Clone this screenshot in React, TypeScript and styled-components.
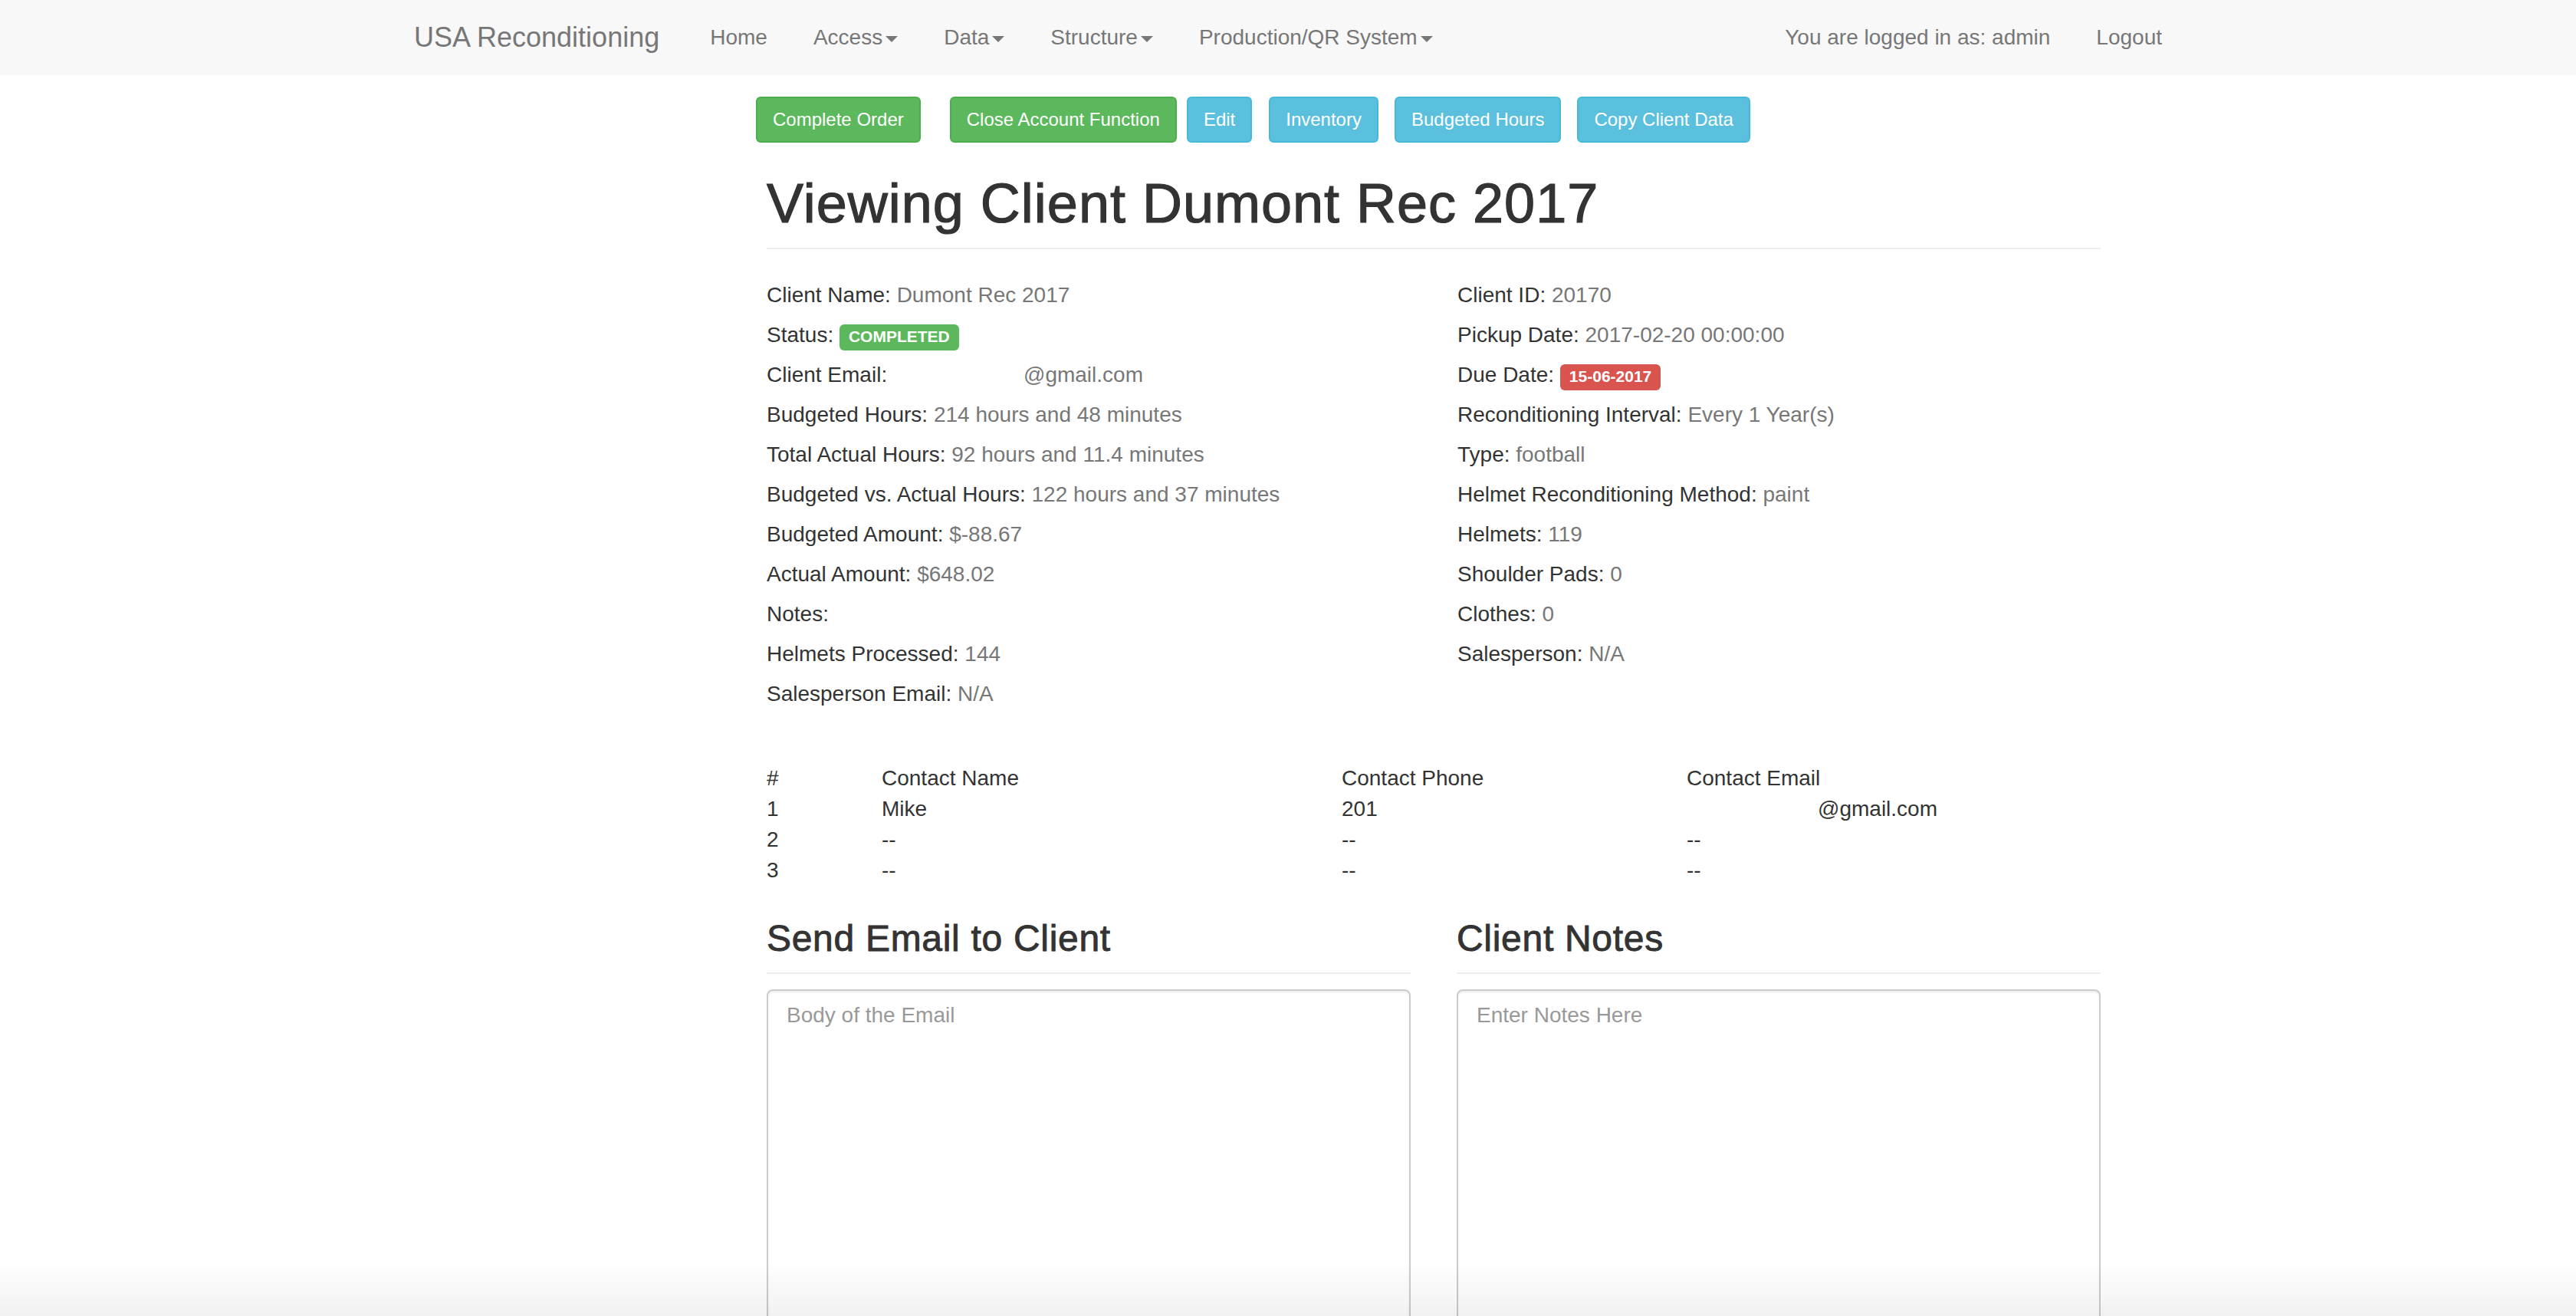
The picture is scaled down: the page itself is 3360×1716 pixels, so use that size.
import React from 'react'
import styled, { createGlobalStyle, css } from 'styled-components'

const GlobalStyle = createGlobalStyle`
    * { box-sizing: border-box; }
    body {
        margin: 0;
        background: #fff;
        color: #333;
        font-family: "Liberation Sans", Helvetica, Arial, sans-serif;
        font-size: 28px;
        line-height: 40px;
    }
`

const Navbar = styled.nav`
    height: 98px;
    background: #f8f8f8;
`

const NavContainer = styled.div`
    width: 2340px;
    height: 100%;
    margin: 0 auto;
    padding: 0 30px;
    display: flex;
    align-items: center;
`

const Brand = styled.a`
    font-size: 36px;
    line-height: 40px;
    color: #777;
    padding-right: 36px;
    text-decoration: none;
`

const NavList = styled.ul<{ $right?: boolean }>`
    display: flex;
    list-style: none;
    margin: 0;
    padding: 0;
    ${p => p.$right && css`
        margin-left: auto;
        margin-right: -30px;
    `}
`

const NavLink = styled.a`
    display: block;
    padding: 0 30px;
    color: #777;
    font-size: 28px;
    line-height: 40px;
    text-decoration: none;
    white-space: nowrap;
`

const Caret = styled.span`
    display: inline-block;
    width: 0;
    height: 0;
    margin-left: 4px;
    vertical-align: middle;
    border-top: 8px solid #777;
    border-left: 8px solid transparent;
    border-right: 8px solid transparent;
`

const Main = styled.main`
    width: 1740px;
    margin-left: 1000px;
`

const ButtonBar = styled.div`
    display: flex;
    margin: 28px 0 0 -14px;
`

const Btn = styled.button<{ $variant: 'success' | 'info'; $ml?: number }>`
    height: 60px;
    padding: 0 20px;
    margin-left: ${p => p.$ml ?? 0}px;
    font-family: inherit;
    font-size: 24px;
    line-height: 36px;
    color: #fff;
    border-radius: 6px;
    border: 2px solid ${p => (p.$variant === 'success' ? '#4cae4c' : '#46b8da')};
    background: ${p => (p.$variant === 'success' ? '#5cb85c' : '#5bc0de')};
    white-space: nowrap;
`

const Title = styled.h1`
    margin: 40px 0 0;
    padding-bottom: 18px;
    font-size: 72px;
    font-weight: 400;
    line-height: 79px;
    letter-spacing: 1px;
    -webkit-text-stroke: 1.2px #333;
    border-bottom: 2px solid #eee;
`

const InfoGrid = styled.div`
    display: grid;
    grid-template-columns: 901px 1fr;
    margin-top: 34px;
`

const InfoRow = styled.div`
    line-height: 52px;
    white-space: nowrap;
`

const Muted = styled.span`
    color: #777;
`

const Redacted = styled.span<{ $w: number }>`
    display: inline-block;
    width: ${p => p.$w}px;
`

const Badge = styled.span<{ $tone: 'success' | 'danger' }>`
    display: inline-block;
    padding: 5px 12px 8px;
    font-size: 21px;
    font-weight: 700;
    line-height: 21px;
    color: #fff;
    border-radius: 6px;
    background: ${p => (p.$tone === 'success' ? '#5cb85c' : '#d9534f')};
`

const ContactTable = styled.table`
    width: 1740px;
    margin-top: 64px;
    border-collapse: collapse;

    th, td {
        padding: 0;
        text-align: left;
        font-weight: 400;
        line-height: 40px;
        white-space: nowrap;
    }
`

const Sections = styled.div`
    display: grid;
    grid-template-columns: 840px 840px;
    column-gap: 60px;
    margin-top: 42px;
`

const SectionTitle = styled.h3`
    margin: 0 0 20px;
    padding-bottom: 18px;
    font-size: 48px;
    font-weight: 400;
    line-height: 53px;
    letter-spacing: 0.7px;
    -webkit-text-stroke: 0.9px #333;
    border-bottom: 2px solid #eee;
`

const TextArea = styled.textarea`
    display: block;
    width: 100%;
    height: 560px;
    padding: 12px 24px;
    font-family: "Liberation Sans", Helvetica, Arial, sans-serif;
    font-size: 28px;
    line-height: 40px;
    color: #555;
    border: 2px solid #ccc;
    border-radius: 8px;
    box-shadow: inset 0 2px 2px rgba(0, 0, 0, 0.075);
    resize: vertical;

    &::placeholder {
        color: #999;
    }
`

const BottomShade = styled.div`
    position: fixed;
    left: 0;
    right: 0;
    bottom: 0;
    height: 70px;
    pointer-events: none;
    background: linear-gradient(rgba(0, 0, 0, 0), rgba(0, 0, 0, 0.055));
`

const leftInfo: [string, React.ReactNode][] = [
    ['Client Name', <Muted>Dumont Rec 2017</Muted>],
    ['Status', <Badge $tone="success">COMPLETED</Badge>],
    ['Client Email', <Muted><Redacted $w={170} />@gmail.com</Muted>],
    ['Budgeted Hours', <Muted>214 hours and 48 minutes</Muted>],
    ['Total Actual Hours', <Muted>92 hours and 11.4 minutes</Muted>],
    ['Budgeted vs. Actual Hours', <Muted>122 hours and 37 minutes</Muted>],
    ['Budgeted Amount', <Muted>$-88.67</Muted>],
    ['Actual Amount', <Muted>$648.02</Muted>],
    ['Notes', null],
    ['Helmets Processed', <Muted>144</Muted>],
    ['Salesperson Email', <Muted>N/A</Muted>],
]

const rightInfo: [string, React.ReactNode][] = [
    ['Client ID', <Muted>20170</Muted>],
    ['Pickup Date', <Muted>2017-02-20 00:00:00</Muted>],
    ['Due Date', <Badge $tone="danger">15-06-2017</Badge>],
    ['Reconditioning Interval', <Muted>Every 1 Year(s)</Muted>],
    ['Type', <Muted>football</Muted>],
    ['Helmet Reconditioning Method', <Muted>paint</Muted>],
    ['Helmets', <Muted>119</Muted>],
    ['Shoulder Pads', <Muted>0</Muted>],
    ['Clothes', <Muted>0</Muted>],
    ['Salesperson', <Muted>N/A</Muted>],
]

const contacts = [
    { id: 1, name: 'Mike', phone: '201', email: '@gmail.com' },
    { id: 2, name: '--', phone: '--', email: '--' },
    { id: 3, name: '--', phone: '--', email: '--' },
]

const navItems = [
    { label: 'Home', dropdown: false },
    { label: 'Access', dropdown: true },
    { label: 'Data', dropdown: true },
    { label: 'Structure', dropdown: true },
    { label: 'Production/QR System', dropdown: true },
]

const App = () => (
    <>
        <GlobalStyle />
        <Navbar>
            <NavContainer>
                <Brand href="#">USA Reconditioning</Brand>
                <NavList>
                    {navItems.map(item => (
                        <li key={item.label}>
                            <NavLink href="#">
                                {item.label}
                                {item.dropdown && <Caret />}
                            </NavLink>
                        </li>
                    ))}
                </NavList>
                <NavList $right>
                    <li><NavLink href="#">You are logged in as: admin</NavLink></li>
                    <li><NavLink href="#">Logout</NavLink></li>
                </NavList>
            </NavContainer>
        </Navbar>

        <Main>
            <ButtonBar>
                <Btn $variant="success">Complete Order</Btn>
                <Btn $variant="success" $ml={38}>Close Account Function</Btn>
                <Btn $variant="info" $ml={13}>Edit</Btn>
                <Btn $variant="info" $ml={22}>Inventory</Btn>
                <Btn $variant="info" $ml={21}>Budgeted Hours</Btn>
                <Btn $variant="info" $ml={21}>Copy Client Data</Btn>
            </ButtonBar>

            <Title>Viewing Client Dumont Rec 2017</Title>

            <InfoGrid>
                <div>
                    {leftInfo.map(([label, value]) => (
                        <InfoRow key={label}>{label}: {value}</InfoRow>
                    ))}
                </div>
                <div>
                    {rightInfo.map(([label, value]) => (
                        <InfoRow key={label}>{label}: {value}</InfoRow>
                    ))}
                </div>
            </InfoGrid>

            <ContactTable>
                <colgroup>
                    <col style={{ width: 150 }} />
                    <col style={{ width: 600 }} />
                    <col style={{ width: 450 }} />
                    <col />
                </colgroup>
                <thead>
                    <tr>
                        <th>#</th>
                        <th>Contact Name</th>
                        <th>Contact Phone</th>
                        <th>Contact Email</th>
                    </tr>
                </thead>
                <tbody>
                    {contacts.map(c => (
                        <tr key={c.id}>
                            <td>{c.id}</td>
                            <td>{c.name}</td>
                            <td>{c.phone}</td>
                            <td>{c.id === 1 && <Redacted $w={171} />}{c.email}</td>
                        </tr>
                    ))}
                </tbody>
            </ContactTable>

            <Sections>
                <div>
                    <SectionTitle>Send Email to Client</SectionTitle>
                    <TextArea placeholder="Body of the Email" />
                </div>
                <div>
                    <SectionTitle>Client Notes</SectionTitle>
                    <TextArea placeholder="Enter Notes Here" />
                </div>
            </Sections>
        </Main>
        <BottomShade />
    </>
)

export default App
